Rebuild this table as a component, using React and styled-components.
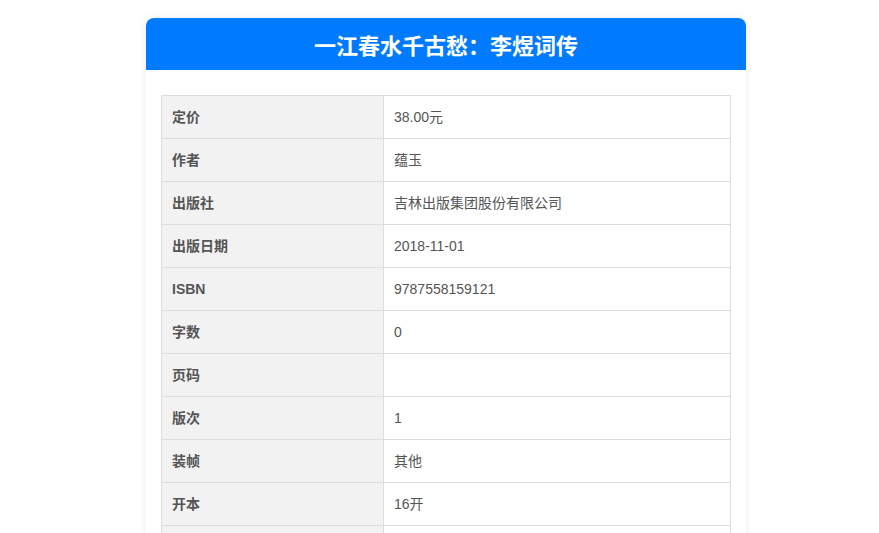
import React from "react";
import styled, { createGlobalStyle } from "styled-components";

const GlobalStyle = createGlobalStyle`
  html, body {
    margin: 0;
    background: #fff;
  }
  body {
    padding: 18px 0 0 13px;
    font-family: "Noto Sans CJK SC", "Liberation Sans", sans-serif;
  }
`;

const Card = styled.div`
  width: 600px;
  margin: 0 auto;
  background: #fff;
  border-radius: 8px;
  box-shadow: 0 0 10px rgba(0, 0, 0, 0.08);
  overflow: hidden;
`;

const Header = styled.div`
  height: 52px;
  background: #007bff;
  color: #fff;
  display: flex;
  align-items: center;
  justify-content: center;
`;

const Title = styled.h1`
  margin: 0;
  font-size: 22px;
  font-weight: bold;
  font-family: "Noto Sans CJK SC", serif;
`;

const Body = styled.div`
  padding: 25px 15px 20px;
`;

const Table = styled.table`
  width: 100%;
  border-collapse: collapse;
  font-size: 14px;
  color: #555;
`;

const Cell = styled.td`
  border: 1px solid #ddd;
  padding: 10px 10px;
  line-height: 22px;
  height: 22px;
  font-family: "Liberation Sans", "Noto Sans CJK SC", sans-serif;
  ${(p) =>
    p.$label &&
    `
    width: 201px;
    background: #f2f2f2;
    font-weight: bold;
  `}
`;

const rows = [
  ["定价", "38.00元"],
  ["作者", "蕴玉"],
  ["出版社", "吉林出版集团股份有限公司"],
  ["出版日期", "2018-11-01"],
  ["ISBN", "9787558159121"],
  ["字数", "0"],
  ["页码", ""],
  ["版次", "1"],
  ["装帧", "其他"],
  ["开本", "16开"],
  ["纸张", "胶版纸"],
];

const App = () => {
  return (
    <>
      <GlobalStyle />
      <Card>
        <Header>
          <Title>一江春水千古愁：李煜词传</Title>
        </Header>
        <Body>
          <Table>
            <tbody>
              {rows.map(([k, v]) => (
                <tr key={k}>
                  <Cell $label>{k}</Cell>
                  <Cell>{v}</Cell>
                </tr>
              ))}
            </tbody>
          </Table>
        </Body>
      </Card>
    </>
  );
};

export default App;
